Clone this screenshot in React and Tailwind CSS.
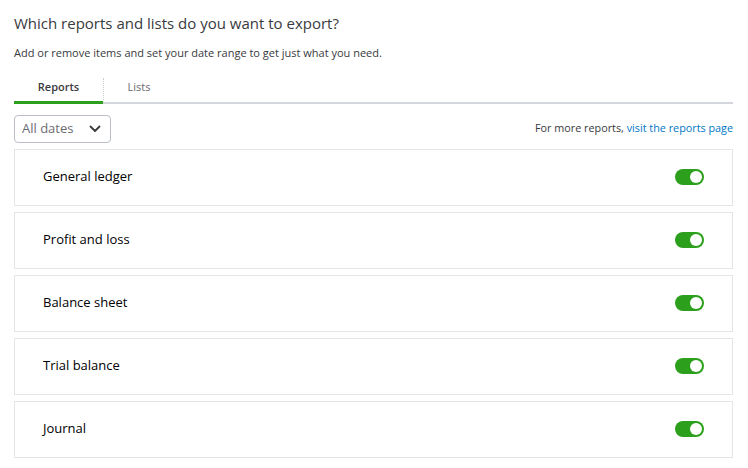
import { useState } from "react";

const reports = ["General ledger", "Profit and loss", "Balance sheet", "Trial balance", "Journal"];

function Toggle({ on, onClick }) {
  return (
    <button
      onClick={onClick}
      className={`relative h-[16px] w-[29px] rounded-full ${on ? "bg-[#2ca01c]" : "bg-[#babec5]"}`}
    >
      <span
        className={`absolute top-[2px] h-[12px] w-[12px] rounded-full bg-white ${on ? "right-[2px]" : "left-[2px]"}`}
      />
    </button>
  );
}

export default function App() {
  const [on, setOn] = useState(reports.map(() => true));

  return (
    <div className="min-h-screen bg-white font-['Open_Sans',sans-serif] text-[#393a3d]">
      <div className="pl-[14px] pr-[15px] pt-[13px]">
        <h1 className="text-[15px] leading-[20px] text-[#393a3d]">Which reports and lists do you want to export?</h1>
        <p className="mt-[12px] text-[11px] leading-[16px] text-[#393a3d]">
          Add or remove items and set your date range to get just what you need.
        </p>

        <div className="mt-[15px] flex border-b-2 border-[#d4d7dc]">
          <div className="relative -mb-[2px] w-[89px] border-b-[3px] border-[#2ca01c] pb-[5px] pt-[3px] text-center text-[11px] font-semibold text-[#393a3d]">
            Reports
          </div>
          <div className="my-[2px] border-l border-dotted border-[#c9ccd1]" />
          <div className="w-[70px] pb-[5px] pt-[3px] text-center text-[11px] text-[#6b6c72]">Lists</div>
        </div>

        <div className="mt-[11px] flex items-center justify-between">
          <button className="flex h-[28px] w-[97px] items-center justify-between rounded-[4px] border border-[#babec5] pl-[7px] pr-[9px] text-[13px] text-[#6b6c72]">
            All dates
            <svg width="12" height="8" viewBox="0 0 12 8" fill="none">
              <path d="M1.5 1.5 6 6l4.5-4.5" stroke="#393a3d" strokeWidth="1.8" strokeLinecap="round" strokeLinejoin="round" />
            </svg>
          </button>
          <p className="text-[10.8px] text-[#393a3d]">
            For more reports, <a className="text-[#0077c5]">visit the reports page</a>
          </p>
        </div>

        <div className="mt-[6px] flex flex-col gap-[6px]">
          {reports.map((r, i) => (
            <div
              key={r}
              className="flex h-[57px] items-center justify-between border border-[#e3e5e8] pl-[28px] pr-[28px]"
            >
              <span className="text-[13px] text-[#000]">{r}</span>
              <Toggle on={on[i]} onClick={() => setOn((p) => p.map((v, j) => (j === i ? !v : v)))} />
            </div>
          ))}
        </div>
      </div>
    </div>
  );
}
